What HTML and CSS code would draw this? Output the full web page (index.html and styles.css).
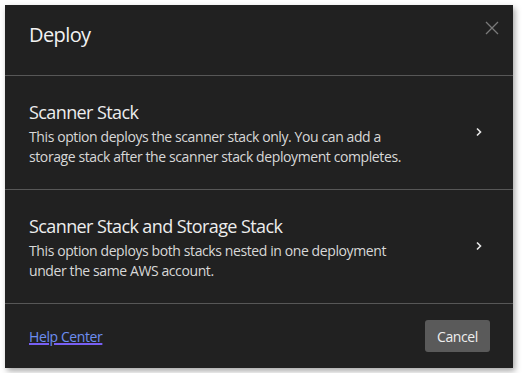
FILE: index.html
```html
<!doctype html>
<html>
<head>
    <title>Deploy</title>
    <link rel="stylesheet" href="styles.css">
</head>
<body>
<div class="dialog">
    <div class="dialog-header">
        <h1>Deploy</h1>
        <button class="close" aria-label="Close">
            <svg width="14" height="14" viewBox="0 0 14 14"><path d="M1 1L13 13M13 1L1 13" stroke="#7a7a7a" stroke-width="1.3" fill="none"/></svg>
        </button>
    </div>
    <div class="option">
        <div class="option-text">
            <h2>Scanner Stack</h2>
            <p>This option deploys the scanner stack only. You can add a storage stack after the scanner stack deployment completes.</p>
        </div>
        <svg class="chevron" width="8" height="10" viewBox="0 0 8 10"><path d="M2 1.5L5.5 5L2 8.5" stroke="#e8e8e8" stroke-width="1.6" fill="none"/></svg>
    </div>
    <div class="option">
        <div class="option-text">
            <h2>Scanner Stack and Storage Stack</h2>
            <p>This option deploys both stacks nested in one deployment under the same AWS account.</p>
        </div>
        <svg class="chevron" width="8" height="10" viewBox="0 0 8 10"><path d="M2 1.5L5.5 5L2 8.5" stroke="#e8e8e8" stroke-width="1.6" fill="none"/></svg>
    </div>
    <div class="dialog-footer">
        <a href="#" class="help">Help Center</a>
        <button class="cancel">Cancel</button>
    </div>
</div>
</body>
</html>
```

FILE: styles.css
```css
* { box-sizing: border-box; }

body {
    margin: 0;
    padding: 5px;
    background: #ffffff;
    font-family: "Open Sans", "Noto Sans", sans-serif;
    color: #e8e8e8;
}

.dialog {
    width: 508px;
    height: 363px;
    background: #212121;
    box-shadow: 2px 3px 6px rgba(0,0,0,0.35);
    display: flex;
    flex-direction: column;
}

.dialog-header {
    height: 71px;
    border-bottom: 1px solid #575757;
    display: flex;
    justify-content: space-between;
    align-items: flex-start;
    padding: 0 14px 0 24px;
}

h1 {
    margin: 0;
    padding-top: 16px;
    font-size: 20px;
    font-weight: 400;
    line-height: 28px;
    letter-spacing: -0.6px;
    color: #f2f2f2;
}

.close {
    margin-top: 16px;
    background: none;
    border: 0;
    padding: 0;
    width: 14px;
    height: 14px;
    cursor: pointer;
}

.option {
    height: 114px;
    border-bottom: 1px solid #575757;
    display: flex;
    align-items: center;
    justify-content: space-between;
    padding: 2px 30px 0 24px;
    cursor: pointer;
}

h2 {
    margin: 0 0 3px;
    font-size: 18px;
    font-weight: 400;
    line-height: 24px;
    letter-spacing: -0.6px;
    color: #ededed;
}

.option-text p {
    margin: 0;
    width: 380px;
    font-size: 14px;
    line-height: 20px;
    letter-spacing: -0.4px;
    color: #d8d8d8;
}

.chevron {
    margin-top: -4px;
}

.dialog-footer {
    flex: 1;
    display: flex;
    align-items: center;
    justify-content: space-between;
    padding: 0 23px 0 24px;
}

.help {
    font-size: 14px;
    letter-spacing: -0.4px;
    color: #6d8ef0;
    text-decoration-color: #7860f5;
    text-decoration-thickness: 2px;
}

.cancel {
    width: 65px;
    height: 32px;
    border: 0;
    border-radius: 3px;
    background: #5a5a5a;
    color: #eeeeee;
    font-family: inherit;
    font-size: 14px;
    letter-spacing: -0.4px;
}
```
